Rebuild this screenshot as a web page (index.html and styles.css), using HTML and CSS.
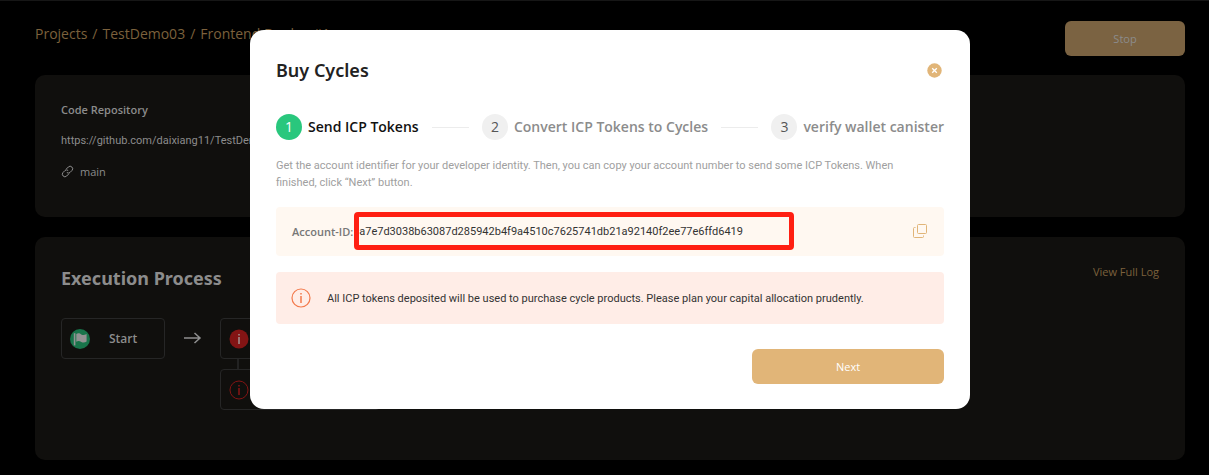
FILE: index.html
```html
<!DOCTYPE html>
<html lang="en">
<head>
<meta charset="utf-8">
<meta name="viewport" content="width=device-width, initial-scale=1">
<title>Buy Cycles</title>
<link rel="stylesheet" href="styles.css">
</head>
<body>
<main class="page">
  <header class="topbar">
    <nav class="crumbs" aria-label="Breadcrumb">
      <a href="#">Projects</a><span>/</span><a href="#">TestDemo03</a><span>/</span><a href="#">Frontend Deploy #1</a>
    </nav>
    <button class="btn btn-stop" type="button">Stop</button>
  </header>

  <section class="card repo">
    <h2 class="repo-title">Code Repository</h2>
    <a class="repo-url" href="#">https://github.com/daixiang11/TestDemo03</a>
    <div class="branch">
      <svg width="13" height="13" viewBox="0 0 13 13" fill="none" stroke="currentColor" stroke-linecap="round" aria-hidden="true">
        <path d="M5.2 4.1 7.3 2a2.5 2.5 0 0 1 3.6 3.600L9.200 7.300a2.500 2.500 0 0 1-3 .5"/>
        <path d="M7.800 8.900 5.700 11a2.500 2.500 0 0 1-3.600-3.600l1.700-1.700a2.500 2.500 0 0 1 3-.5"/>
      </svg>
      <span>main</span>
    </div>
  </section>

  <section class="card process">
    <div class="process-head">
      <h2 class="process-title">Execution Process</h2>
      <a class="log-link" href="#">View Full Log</a>
    </div>
    <div class="flow">
      <div class="node node-start">
        <svg width="20" height="20" viewBox="0 0 20 20" aria-hidden="true">
          <circle cx="10" cy="10" r="10" fill="#18744a"/>
          <path d="M4.600 4.200v12.200" stroke="#929292" stroke-width="1.600"/>
          <path d="M6.300 4.900c2.200-1.200 3.700-.3 5 .5 1.700 1 3.500.6 5.300-.5v7.600c-1.800 1.400-3.600 1.400-5.300.5-1.600-.8-3-1.400-5-.2z" fill="#929292"/>
        </svg>
        <span>Start</span>
      </div>
      <svg class="arrow" width="19" height="12" viewBox="0 0 19 12" fill="none" stroke="#8f8f8f" stroke-width="1.500" aria-hidden="true">
        <path d="M1 6h16M11.500 1l5.500 5-5.500 5"/>
      </svg>
      <div class="stack">
        <div class="node">
          <svg width="20" height="20" viewBox="0 0 20 20" aria-hidden="true">
            <circle cx="10" cy="10" r="9.500" fill="#831414"/>
            <path d="M10 5v1.600M10 8v7" stroke="#a08a8a" stroke-width="1.600"/>
          </svg>
        </div>
        <div class="link-line"></div>
        <div class="node">
          <svg width="20" height="20" viewBox="0 0 20 20" fill="none" stroke="#831414" aria-hidden="true">
            <circle cx="10" cy="10" r="9"/>
            <path d="M10 5v1.600M10 8v7" stroke-width="1.600"/>
          </svg>
        </div>
      </div>
    </div>
  </section>
</main>

<div class="overlay">
  <div class="modal" role="dialog" aria-modal="true" aria-labelledby="modal-title">
    <div class="modal-head">
      <h1 id="modal-title">Buy Cycles</h1>
      <button class="icon-btn close" type="button" aria-label="Close">
        <svg width="15" height="15" viewBox="0 0 15 15" aria-hidden="true">
          <circle cx="7.500" cy="7.500" r="7.200" fill="#e1b578"/>
          <path d="M5.200 5.200l4.600 4.600M9.800 5.200 5.200 9.800" stroke="#fff" stroke-width="1.300"/>
        </svg>
      </button>
    </div>

    <ol class="steps">
      <li class="step active"><span class="num">1</span><span class="label">Send ICP Tokens</span></li>
      <li class="step"><span class="num">2</span><span class="label">Convert ICP Tokens to Cycles</span></li>
      <li class="step"><span class="num">3</span><span class="label">verify wallet canister</span></li>
    </ol>

    <p class="hint">Get the account identifier for your developer identity. Then, you can copy your account number to send some ICP Tokens. When finished, click “Next” button.</p>

    <div class="account">
      <span class="account-label">Account-ID:</span>
      <span class="account-id">a7e7d3038b63087d285942b4f9a4510c7625741db21a92140f2ee77e6ffd6419</span>
      <button class="icon-btn copy" type="button" aria-label="Copy account ID">
        <svg width="15" height="15" viewBox="0 0 15 15" fill="none" stroke="#e1b578" aria-hidden="true">
          <rect x="4.500" y=".5" width="9" height="9" rx="1"/>
          <path d="M2.500 3.500h-1a1 1 0 0 0-1 1v8a1 1 0 0 0 1 1h8a1 1 0 0 0 1-1v-1"/>
        </svg>
      </button>
    </div>

    <div class="notice">
      <svg width="20" height="20" viewBox="0 0 20 20" fill="none" stroke="#f37a4c" aria-hidden="true">
        <circle cx="10" cy="10" r="9" stroke-width="1.200"/>
        <path d="M10 5v1.600M10 8v7" stroke-width="1.500"/>
      </svg>
      <p>All ICP tokens deposited will be used to purchase cycle products. Please plan your capital allocation prudently.</p>
    </div>

    <div class="actions">
      <button class="btn btn-next" type="button">Next</button>
    </div>
  </div>
</div>
</body>
</html>
```

FILE: styles.css
```css
* { box-sizing: border-box; }

body {
  margin: 0;
  background: #000;
  color: #8c8c8c;
  font: 11px/17px "Open Sans", "Noto Sans", sans-serif;
}

h1, h2, p, ol { margin: 0; padding: 0; }
a { color: inherit; text-decoration: none; }
svg { display: block; flex: none; }
button { border: 0; padding: 0; font: inherit; cursor: pointer; }

.page {
  display: flex;
  flex-direction: column;
  gap: 20px;
  padding: 20px 24px 15px 35px;
  border-top: 1px solid #161616;
}

.topbar {
  display: flex;
  justify-content: space-between;
  align-items: flex-start;
}

.crumbs {
  display: flex;
  gap: 5px;
  color: #7c613c;
  font-size: 14px;
  line-height: 25px;
}

.btn {
  height: 35px;
  border-radius: 6px;
  font-weight: 500;
}

.btn-stop {
  width: 120px;
  background: #7b6342;
  color: #8c8c8c;
}

.card {
  padding: 26px;
  border-radius: 10px;
  background: #100f0d;
}

.topbar + .card { margin-top: -1px; }

.repo {
  display: flex;
  flex-direction: column;
  align-items: flex-start;
  gap: 14px;
  min-height: 142px;
}

.repo-title { font-size: 11px; line-height: 17px; font-weight: 600; }

.branch { display: flex; align-items: center; gap: 6px; }

.process { min-height: 223px; }

.process-head { display: flex; justify-content: space-between; }

.process-title { font: 700 18px/31px "Noto Sans", "Open Sans", sans-serif; }

.log-link { color: #7c613c; }

.flow {
  display: flex;
  align-items: flex-start;
  margin-top: 24px;
}

.node {
  display: flex;
  align-items: center;
  height: 41px;
  padding: 0 8px;
  border: 1px solid #262626;
  border-radius: 4px;
}

.node-start {
  gap: 19px;
  width: 104px;
  font-size: 12px;
  font-weight: 600;
}

.arrow { margin: 14px 18px; }

.stack { width: 160px; }

.link-line { width: 2px; height: 10px; margin-left: 17px; background: #222; }

.overlay {
  position: fixed;
  inset: 0;
  display: flex;
  justify-content: center;
  align-items: flex-start;
  padding: 30px 24px 30px 35px;
}

.modal {
  flex: 0 1 720px;
  padding: 25px 26px;
  border-radius: 14px;
  background: #fff;
  color: #333;
}

.modal-head {
  display: flex;
  justify-content: space-between;
  align-items: center;
  padding-right: 2px;
}

.modal-head h1 { color: #222; font: 600 18px/30px "Noto Sans", "Open Sans", sans-serif; }

.icon-btn { background: none; }

.steps {
  display: flex;
  justify-content: space-between;
  align-items: center;
  margin-top: 29px;
  list-style: none;
}

.step {
  display: flex;
  align-items: center;
  gap: 6px;
  color: #8c8c8c;
  font-size: 14px;
  line-height: 26px;
  font-weight: 700;
}

.step .label { font-weight: 600; }

.step:not(:last-child) { flex: 1 1 auto; }

.step:not(:last-child)::after {
  content: "";
  flex: 1;
  height: 1px;
  margin: 0 13px 0 7px;
  background: #ececec;
}

.step.active { color: #111; }

.num {
  width: 26px;
  height: 26px;
  border-radius: 50%;
  background: #f0f0f0;
  color: #555;
  font-weight: 400;
  text-align: center;
}

.active .num { background: #29c77d; color: #fff; }

.hint { margin-top: 17px; padding-right: 16px; color: #a0a0a0; }

.hint, .repo-url, .account-id, .notice { font-family: Roboto, "Open Sans", sans-serif; }

.account {
  display: flex;
  align-items: center;
  margin-top: 16px;
  padding: 5px 16px 6px;
  border-radius: 4px;
  background: #fff8f1;
}

.account-label { color: #777; font-weight: 600; }

.account-id {
  width: 440px;
  margin-left: 1px;
  padding: 6px 0 5px;
  border: 5px solid #ff1f12;
  border-radius: 4px;
}

.copy { margin-left: auto; }

.notice {
  display: flex;
  align-items: center;
  gap: 16px;
  min-height: 52px;
  margin-top: 16px;
  padding: 8px 15px;
  border-radius: 4px;
  background: #ffede7;
}

.actions { display: flex; justify-content: flex-end; margin-top: 25px; }

.btn-next { width: 192px; background: #e1b578; color: #fff; }
```
